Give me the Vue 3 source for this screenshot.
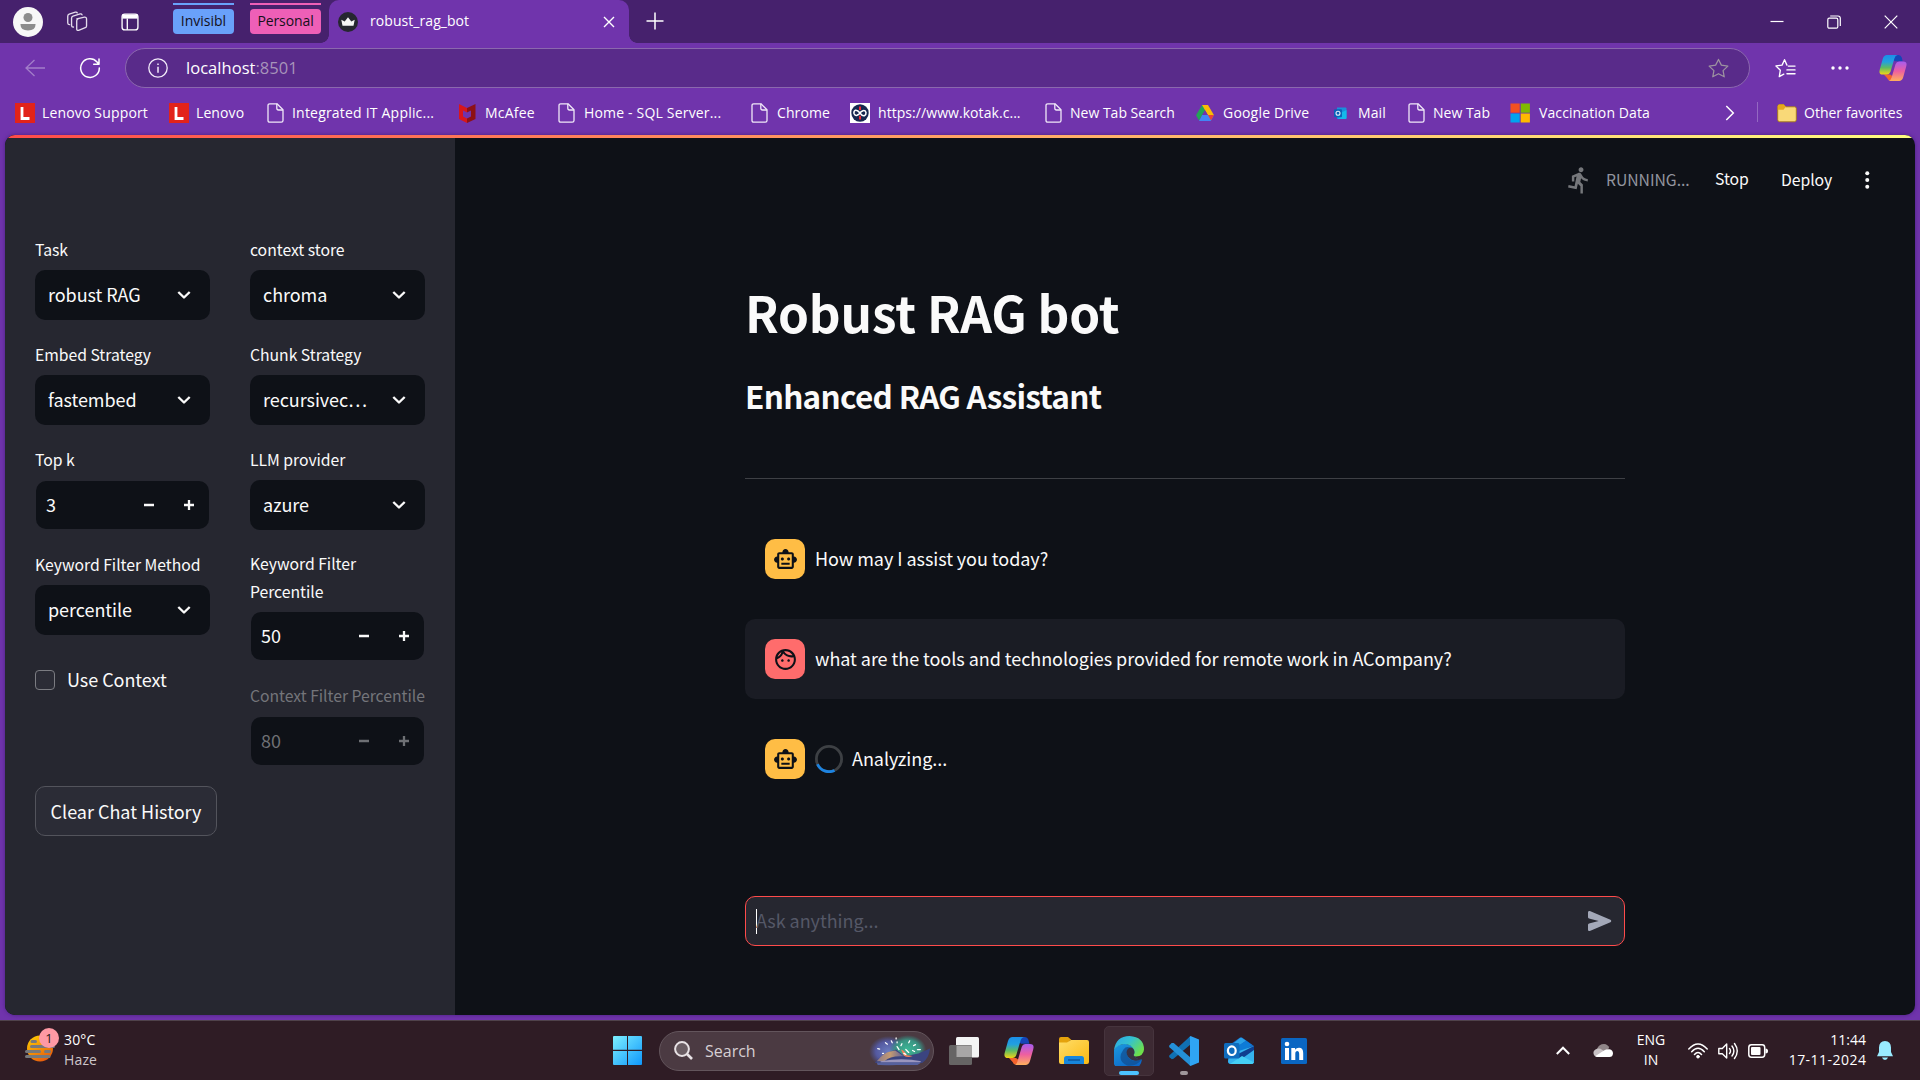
<script setup>
const bookmarks = [
  { label: 'Lenovo Support', icon: 'lenovo', w: 154, ls: 0.16 },
  { label: 'Lenovo', icon: 'lenovo', w: 96, ls: 0.1 },
  { label: 'Integrated IT Applic...', icon: 'page', w: 192, ls: 0.2 },
  { label: 'McAfee', icon: 'mcafee', w: 99, ls: 0.2, pad: 1 },
  { label: 'Home - SQL Server...', icon: 'page', w: 193, ls: 0.18, pad: 1 },
  { label: 'Chrome', icon: 'page', w: 101, ls: 0.1, pad: 1 },
  { label: 'https://www.kotak.c...', icon: 'kotak', w: 193, ls: 0.06, pad: 1 },
  { label: 'New Tab Search', icon: 'page', w: 152, ls: 0 },
  { label: 'Google Drive', icon: 'drive', w: 136, ls: 0.2, pad: 1 },
  { label: 'Mail', icon: 'mail', w: 75, ls: 0.1 },
  { label: 'New Tab', icon: 'page', w: 104, ls: 0 },
  { label: 'Vaccination Data', icon: 'ms', w: 150, ls: 0.1, pad: 2 },
]
const left = [
  { label: 'Task', value: 'robust RAG', type: 'select' },
  { label: 'Embed Strategy', value: 'fastembed', type: 'select' },
  { label: 'Top k', value: '3', type: 'number' },
  { label: 'Keyword Filter Method', value: 'percentile', type: 'select' },
]
const right = [
  { label: 'context store', value: 'chroma', type: 'select' },
  { label: 'Chunk Strategy', value: 'recursivec…', type: 'select' },
  { label: 'LLM provider', value: 'azure', type: 'select' },
  { label: 'Keyword Filter Percentile', value: '50', type: 'number', tall: true },
  { label: 'Context Filter Percentile', value: '80', type: 'number', disabled: true },
]
const messages = [
  { role: 'bot', text: 'How may I assist you today?' },
  { role: 'user', text: 'what are the tools and technologies provided for remote work in ACompany?' },
  { role: 'bot', text: 'Analyzing...', busy: true },
]
</script>

<template>
  <div class="screen">
    <svg class="defs" width="0" height="0">
      <defs>
        <linearGradient id="cpA" x1="0" y1="0" x2="0" y2="1">
          <stop offset="0" stop-color="#1b8fe8" /><stop offset=".35" stop-color="#22a0e0" />
          <stop offset=".65" stop-color="#5dbb63" /><stop offset="1" stop-color="#f2d416" />
        </linearGradient>
        <linearGradient id="cpB" x1="0" y1="0" x2="0" y2="1">
          <stop offset="0" stop-color="#a65cf0" /><stop offset=".5" stop-color="#ee5fa0" />
          <stop offset="1" stop-color="#ffb05c" />
        </linearGradient>
        <linearGradient id="winG" gradientUnits="userSpaceOnUse" x1="0" y1="0" x2="29" y2="29">
          <stop offset="0" stop-color="#7df0ff" /><stop offset="1" stop-color="#0f97fb" />
        </linearGradient>
        <linearGradient id="sunG" x1="0" y1="0" x2=".6" y2="1">
          <stop offset="0" stop-color="#ffd400" /><stop offset="1" stop-color="#e85d0c" />
        </linearGradient>
        <linearGradient id="edgeG" x1="0" y1="0" x2="1" y2=".6">
          <stop offset="0" stop-color="#2aa6e8" /><stop offset=".5" stop-color="#34c1d0" /><stop offset="1" stop-color="#6ee04a" />
        </linearGradient>
        <linearGradient id="edgeB" x1="0" y1="0" x2=".6" y2="1">
          <stop offset="0" stop-color="#1c9be0" /><stop offset="1" stop-color="#0b62c4" />
        </linearGradient>
        <linearGradient id="fold" x1="0" y1="0" x2="1" y2="1">
          <stop offset="0" stop-color="#ffdd68" /><stop offset="1" stop-color="#fbb912" />
        </linearGradient>
        <linearGradient id="hill" x1="0" y1="0" x2="1" y2="0">
          <stop offset="0" stop-color="#8d7a8c" /><stop offset=".5" stop-color="#c39a72" /><stop offset="1" stop-color="#5a5f9a" />
        </linearGradient>
        <radialGradient id="auG"><stop offset="0" stop-color="#3cb796" /><stop offset=".65" stop-color="#3a9382" /><stop offset="1" stop-color="#35877f" stop-opacity="0" /></radialGradient>
        <radialGradient id="auB"><stop offset="0" stop-color="#6b7cc0" /><stop offset=".65" stop-color="#5459a0" /><stop offset="1" stop-color="#4c5498" stop-opacity="0" /></radialGradient>
        <symbol id="copilot" viewBox="0 0 30 28">
          <path d="M18 0h3q2.500 0 3.400 2.700l1 4H17L14 4z" fill="#1545b8" />
          <path d="M5 21h7l4 3-1 3.500H12q-2.600 0-3.400-2.600z" fill="#f4632c" />
          <path d="M8.500 0H20q-2.600.4-3.500 3.800L12.300 18q-1 3-4 3H4Q-.8 21 .8 15.500L4 4Q5.300 0 8.500 0z" fill="url(#cpA)" />
          <path d="M21.500 28H10q2.600-.4 3.500-3.800L17.700 10q1-3 4-3H26q4.800 0 3.200 5.500L26 24q-1.300 4-4.500 4z" fill="url(#cpB)" />
        </symbol>
      </defs>
    </svg>

    <header class="tabs">
      <svg class="avatar" viewBox="0 0 30 30"><circle cx="15" cy="15" r="15" fill="#f7f7f7" /><circle cx="15" cy="10.500" r="4.500" fill="#8c8c8c" /><path d="M7.500 17h15v.8q0 5.700-7.500 5.700t-7.500-5.700z" fill="#8c8c8c" /></svg>
      <svg class="workspaces" viewBox="0 0 22 22" fill="none" stroke="#e4dcec" stroke-width="1.400" stroke-linejoin="round" stroke-linecap="round"><path d="M10.500 7.800l8-1.700q2-.3 2.200 1.600v7.500q0 1.400-1.300 1.900l-7 2.800q-2 .4-2-1.500V9.800q0-1.600 1.500-2z" transform="translate(.3 .4)" /><path d="M7.300 16.800q-1.800.2-2-1.500V7.500q0-1.600 1.500-2.200l7.500-2.200q1.600-.3 2 1" /><path d="M3.300 14.300Q1.400 14.300 1.300 12.600V5.400q0-1.600 1.500-2.200L9.300 1.200q1.600-.3 2 .8" /></svg>
      <svg class="vtabs" viewBox="0 0 20 20" fill="none" stroke="#fff" stroke-width="1.500"><rect x="1.200" y="1.200" width="17.600" height="17.600" rx="3" /><path d="M1.500 4h17" stroke-width="4.500" /><path d="M7 6v12.500" /></svg>
      <div class="group blue"><span>Invisibl</span></div>
      <div class="group pink"><span>Personal</span></div>
      <div class="tab">
        <svg class="fav" viewBox="0 0 20 20"><circle cx="10" cy="10" r="10" fill="#262730" /><path d="M4.500 13.800L3.300 7.800 6.700 9.400 10 5.300l3.300 4.100 3.400-1.600-1.200 6z" fill="#f6f6f6" /></svg>
        <span>robust_rag_bot</span>
        <svg class="x" viewBox="0 0 12 12" stroke="#fff" stroke-width="1.400"><path d="M1 1l10 10M11 1L1 11" /></svg>
      </div>
      <svg class="plus" viewBox="0 0 18 18" stroke="#fff" stroke-width="1.500"><path d="M9 0.500v17M.5 9h17" /></svg>
      <div class="winctl">
        <svg viewBox="0 0 14 14" stroke="#fff" stroke-width="1.200" fill="none"><path d="M.5 6.500h13" /></svg>
        <svg viewBox="0 0 14 14" stroke="#fff" stroke-width="1.200" fill="none"><rect x=".8" y="3.200" width="10" height="10" rx="1.500" /><path d="M3.200 1h7.800q2.300 0 2.300 2.300V11" /></svg>
        <svg viewBox="0 0 14 14" stroke="#fff" stroke-width="1.200" fill="none"><path d="M.7.7l12.600 12.600M13.300.7L.7 13.300" /></svg>
      </div>
    </header>

    <div class="toolbar">
      <svg class="back" viewBox="0 0 20 18" fill="none" stroke="#a27dc9" stroke-width="1.300"><path d="M9.500 1L1 9l8.500 8M1 9h19" /></svg>
      <svg class="reload" viewBox="0 0 22 22" fill="none" stroke="#fff" stroke-width="1.500" stroke-linecap="round" stroke-linejoin="round"><path d="M20.300 11A9.300 9.300 0 1 1 18 5l1.800 2M20 2v5.300h-5.300" /></svg>
      <div class="address">
        <svg class="info" viewBox="0 0 20 20" fill="none" stroke="#f3ecfa" stroke-width="1.300"><circle cx="10" cy="10" r="9.200" /><path d="M10 8.700v6M10 5.500v1.500" stroke-width="1.500" /></svg>
        <span class="url">localhost<i>:8501</i></span>
        <svg class="star" viewBox="0 0 22 20" fill="none" stroke="#9d93a0" stroke-width="1.300" stroke-linejoin="round"><path d="M11 1l3 6 6.800 1-5 4.700L17 19.200l-6-3.200-6 3.200 1.200-6.500-5-4.700L8 7z" /></svg>
      </div>
      <svg class="favs" viewBox="0 0 22 20" fill="none" stroke="#fff" stroke-width="1.400" stroke-linejoin="round" stroke-linecap="round"><path d="M12.500 7L10 1.300 7.400 7 1 7.800l4.600 4.500L4.500 19l4.700-2.600M14 8h7M12.500 12H21M12.500 16H21" /></svg>
      <svg class="more" viewBox="0 0 18 4" fill="#fff"><circle cx="2" cy="2" r="1.700" /><circle cx="9" cy="2" r="1.700" /><circle cx="16" cy="2" r="1.700" /></svg>
      <svg class="cop"><use href="#copilot" /></svg>
    </div>

    <nav class="bookmarks">
      <div v-for="b in bookmarks" :key="b.label" class="bm" :style="{ width: b.w + 'px' }">
        <svg v-if="b.icon === 'lenovo'" viewBox="0 0 20 20"><rect width="20" height="20" fill="#e2231a" /><path d="M7 4v11.500h7.500" fill="none" stroke="#fff" stroke-width="2.800" /></svg>
        <svg v-else-if="b.icon === 'page'" viewBox="0 0 20 20" fill="none" stroke="#f0e8f8" stroke-width="1.300" stroke-linejoin="round"><path d="M4.700.8H12l6 6v10.700q0 1.700-1.700 1.700H4.700Q3 19.200 3 17.500v-15Q3 .8 4.700.8z" /><path d="M11.800.8v4.500q0 1.700 1.700 1.700H18" /></svg>
        <svg v-else-if="b.icon === 'mcafee'" viewBox="0 0 20 20"><path d="M2 1l8 4v4.500L6 7.500v6l4 2V20l-8-4z" fill="#d8161c" /><path d="M18.500 1L10 5v4.500l4-2v6l-4 2V20l8.500-4z" fill="#8d1116" /></svg>
        <svg v-else-if="b.icon === 'kotak'" viewBox="0 0 20 20"><rect width="20" height="20" fill="#fff" /><circle cx="10" cy="10" r="8.700" fill="#16284f" /><path d="M10 10Q7.500 6.700 5.500 7.200 3.500 8.300 4 10.500q.8 2.500 3 1.800Q9 11.500 10 10t3-2.300q2.300-.5 3 1.800.3 2.300-1.700 3.300Q12.300 13.300 10 10z" fill="none" stroke="#fff" stroke-width="1.500" /><path d="M10 3.500v3.600M10 12.800v3.700" stroke="#ee2832" stroke-width="2" /></svg>
        <svg v-else-if="b.icon === 'drive'" viewBox="0 0 20 20"><path d="M7 2h6L7.300 12 4 17.500 1 12.300z" fill="#23a455" /><path d="M7 2h6l6 10.300h-6z" fill="#fbbc05" /><path d="M7.200 12H19l-3.200 6H4z" fill="#4285f4" /><path d="M13 12h6l-3 5.500z" fill="#ea4335" /><path d="M10 7.200L12.800 12H7.200z" fill="#7034ac" /></svg>
        <svg v-else-if="b.icon === 'mail'" viewBox="0 0 20 20"><path d="M6 4.500h8.500q1 0 1 1V15q0 1-1 1H6z" fill="#1890dc" /><path d="M9.500 10l6-3v8q0 1-1 1H7z" fill="#14b9ea" /><rect x="3" y="6.200" width="8" height="8" rx="1" fill="#0a62b8" /><circle cx="7" cy="10.200" r="2" fill="none" stroke="#e4eefa" stroke-width="1.100" /></svg>
        <svg v-else viewBox="0 0 20 20"><path d="M.5.500h9.200v9.200H.5z" fill="#f25022" /><path d="M10.700.500h9.200v9.200h-9.200z" fill="#7fba00" /><path d="M.5 10.500h9.200v9H.5z" fill="#00a4ef" /><path d="M10.700 10.500h9.200v9h-9.200z" fill="#ffb900" /></svg>
        <span :style="{ letterSpacing: b.ls + 'px', paddingLeft: (b.pad || 0) + 'px' }">{{ b.label }}</span>
      </div>
      <svg class="chev" viewBox="0 0 10 16" fill="none" stroke="#fff" stroke-width="1.500"><path d="M1.300 1l7 7-7 7" /></svg>
      <i class="divider"></i>
      <svg class="folder" viewBox="0 0 20 20"><path d="M.7 3.500q0-2 2-2h4l2 2.300h9q1.600 0 1.600 1.700v11.300q0 2-2 2H2.700q-2 0-2-2z" fill="#f9d978" stroke="#a87a15" stroke-width=".9" /><path d="M.8 6.800V3.500q0-2 2-2h4l2 2.300-2.300 3z" fill="#e6a91c" /></svg>
      <span>Other favorites</span>
    </nav>

    <div class="viewport">
      <div class="page">
        <aside>
          <div class="cols">
            <div v-for="(col, ci) in [left, right]" :key="ci" class="col">
              <div v-for="f in col" :key="f.label" class="field" :class="[f.type, { tall: f.tall, disabled: f.disabled }]">
                <label>{{ f.label }}</label>
                <div class="box">
                  <span>{{ f.value }}</span>
                  <svg v-if="f.type === 'select'" class="down" viewBox="0 0 14 10" fill="none" stroke="#fafafa" stroke-width="2.400" stroke-linejoin="round"><path d="M1.300 2L7 7.500 12.700 2" /></svg>
                  <template v-else>
                    <svg class="step" viewBox="0 0 10 10" stroke="currentColor" stroke-width="2.500"><path d="M0 5h10" /></svg>
                    <svg class="step" viewBox="0 0 10 10" stroke="currentColor" stroke-width="2.300"><path d="M0 5h10M5 0v10" /></svg>
                  </template>
                </div>
              </div>
              <div v-if="ci === 0" class="check"><i></i><span>Use Context</span></div>
            </div>
          </div>
          <button class="clear">Clear Chat History</button>
        </aside>

        <main>
          <div class="status">
            <svg class="runner" viewBox="2 1 18 22.500" fill="#75777b"><path d="M13.490 5.480c1.100 0 2-.9 2-2s-.9-2-2-2-2 .9-2 2 .9 2 2 2zm-3.600 13.900l1-4.400 2.100 2v6h2v-7.500l-2.100-2 .6-3c1.300 1.500 3.300 2.500 5.500 2.500v-2c-1.900 0-3.500-1-4.300-2.400l-1-1.600c-.4-.6-1-1-1.700-1-.3 0-.5.1-.8.1l-5.200 2.200v4.700h2v-3.400l1.800-.7-1.600 8.100-4.900-1-.4 2 7 1.400z" /></svg>
            <span class="running">RUNNING...</span>
            <span class="stop">Stop</span>
            <span class="deploy">Deploy</span>
            <svg class="kebab" viewBox="0 0 4 18" fill="#fafafa"><circle cx="2" cy="2.200" r="2" /><circle cx="2" cy="9" r="2" /><circle cx="2" cy="15.800" r="2" /></svg>
          </div>
          <div class="content">
            <h1>Robust RAG bot</h1>
            <h2>Enhanced RAG Assistant</h2>
            <hr />
            <div v-for="m in messages" :key="m.text" class="msg" :class="m.role">
              <div class="who">
                <svg v-if="m.role === 'bot'" viewBox="0 0 24 24" fill="#0e1117"><path d="M20 9V7c0-1.100-.9-2-2-2h-3c0-1.660-1.340-3-3-3S9 3.340 9 5H6c-1.100 0-2 .9-2 2v2c-1.660 0-3 1.340-3 3s1.340 3 3 3v4c0 1.100.9 2 2 2h12c1.100 0 2-.9 2-2v-4c1.660 0 3-1.340 3-3s-1.340-3-3-3zm-2 10H6V7h12v12zM9 13c-.83 0-1.500-.67-1.500-1.500S8.170 10 9 10s1.500.67 1.500 1.500S9.830 13 9 13zm7.500-1.500c0 .83-.67 1.500-1.500 1.500s-1.500-.67-1.500-1.500.67-1.500 1.500-1.500 1.500.67 1.500 1.500zM8 15h8v2H8v-2z" /></svg>
                <svg v-else viewBox="0 0 24 24" fill="#0e1117"><path d="M10.250 13c0 .69-.56 1.250-1.250 1.250S7.750 13.690 7.750 13s.56-1.250 1.250-1.250 1.250.56 1.250 1.250zM15 11.750c-.69 0-1.250.56-1.250 1.250s.56 1.250 1.250 1.250 1.250-.56 1.250-1.250-.56-1.250-1.250-1.250zm7 .25c0 5.520-4.480 10-10 10S2 17.520 2 12 6.480 2 12 2s10 4.480 10 10zM10.660 4.120C12.060 6.440 14.600 8 17.500 8c.46 0 .91-.05 1.340-.12C17.440 5.560 14.900 4 12 4c-.46 0-.91.05-1.340.12zM4.420 9.470c1.710-.97 3.030-2.550 3.660-4.440C6.370 6 5.050 7.580 4.420 9.470zM20 12c0-.78-.12-1.530-.33-2.240-.7.150-1.420.24-2.170.24-3.130 0-5.920-1.440-7.760-3.690C8.690 8.870 6.600 10.880 4 11.860c.01.04 0 .09 0 .14 0 4.410 3.590 8 8 8s8-3.590 8-8z" /></svg>
              </div>
              <svg v-if="m.busy" class="spin" viewBox="0 0 28 28" fill="none" stroke-width="2.800"><circle cx="14" cy="14" r="12.600" stroke="#3d4044" /><path d="M2.500 19.200A12.600 12.600 0 0 0 19.500 25.400" stroke="#1c83e1" /></svg>
              <p>{{ m.text }}</p>
            </div>
          </div>
          <div class="chat">
            <i class="caret"></i>
            <span>Ask anything...</span>
            <svg viewBox="0 0 24 24" fill="#a3a8b8"><path d="M3 5.510v3.710c0 .46.310.86.760.97L11 12l-7.240 1.810c-.45.110-.76.510-.76.970v3.710c0 .72.730 1.200 1.390.92l15.420-6.490c.82-.34.82-1.500 0-1.840L4.390 4.590C3.730 4.310 3 4.790 3 5.510z" /></svg>
          </div>
        </main>
      </div>
    </div>

    <footer class="taskbar">
      <div class="weather">
        <svg viewBox="0 0 36 36"><circle cx="15" cy="21.500" r="13" fill="url(#sunG)" /><g stroke="#77797c" stroke-width="3" stroke-linecap="round"><path d="M7 14.500h3.500M6.500 19.500h22M1.500 24.500h13M20.500 24.500h4M1.500 29.500h22.500" /></g><circle cx="24" cy="11" r="10" fill="#ff99a4" /></svg>
        <b>1</b>
        <div><span>30°C</span><span class="dim">Haze</span></div>
      </div>
      <div class="apps">
        <svg class="win" viewBox="0 0 29 29" fill="url(#winG)"><path d="M1 0h13v13.800H0V1q0-1 1-1zM15 0h13q1 0 1 1v12.800H15zM0 15h14v14H1q-1 0-1-1zM15 15h14v13q0 1-1 1H15z" /></svg>
        <div class="search">
          <svg class="glass" viewBox="0 0 19 19" fill="none" stroke="#e8e2e5"><circle cx="8" cy="8" r="6.900" stroke-width="2" fill="#6a5d63" /><path d="M13 13l5 5" stroke-width="2.600" /></svg>
          <span>Search</span>
          <svg class="art" viewBox="0 0 64 32">
            <ellipse cx="20" cy="17" rx="20" ry="16" fill="url(#auB)" /><ellipse cx="40" cy="15" rx="19" ry="15" fill="url(#auG)" />
            <path d="M6 29Q12 21 20 18l8-3 9 7 14-3 12-5q-1 10-8 15z" fill="#3b4480" />
            <path d="M8 27q7-9 14-10l5-1 9 6q-14-1-20 5z" fill="url(#hill)" />
            <path d="M33 15q4 1 6 6l6 .8q-5 2-9-.5z" fill="#f0805a" />
            <path d="M12 27q22-4 42 0l-2 1.500H12z" fill="#9a95bd" /><path d="M8 28.500h46l-4 2.500H9z" fill="#56619e" />
            <g stroke="#fff" stroke-width="1.300" stroke-linecap="round"><path d="M17 8l2 1.500M23 6l1 2M29 7v1M9 14l2 .5M42 6l-1 2M48 10l-2 1M53 15h-3M29 12l2 3M34 9l-1 2M38 15l3 3M45 16l2 1M28 3v1M36 19l2 1M14 19h1" /></g>
          </svg>
        </div>
        <svg class="tv" viewBox="0 0 30 28"><rect x="7" y="0" width="23" height="20.500" rx="1.500" fill="#f4f4f4" /><rect x="0" y="8" width="23" height="20" rx="1.500" fill="#666464" /><path d="M7.500 8.500h15.500v11.500H7.500z" fill="#a8a6a6" /></svg>
        <svg class="cp"><use href="#copilot" /></svg>
        <svg class="ex" viewBox="0 0 30 27"><path d="M0 2q0-2 2-2h7l4 3.500h-2L8 7H0z" fill="#e5a20c" /><path d="M0 5.500h8L12 3h16q2 0 2 2v20q0 2-2 2H2q-2 0-2-2z" fill="url(#fold)" /><path d="M5 27v-5.500Q5 19 7.500 19h15q2.500 0 2.500 2.500V27z" fill="#1786dc" /><path d="M9 23h12" stroke="#0b4f93" stroke-width="1.300" /></svg>
        <div class="cell active">
          <svg viewBox="0 0 30 30"><path d="M28 23.500A15 15 0 1 1 0 14Q3 7 12 8q9 1 9 8 0 2-1.500 3.500 2.500 4 8.500 4z" fill="url(#edgeB)" /><path d="M13 29.500Q2 24 9.500 13.500 12 10 16 11.500q-5 4-2 9.500 4.500 6 13.500 2.800Q22 31 13 29.500z" fill="#124f91" opacity=".75" /><path d="M0 14Q2 0 15.500 0 30 1 30 13.500 29.500 20 22 20.500q-3.500-.3-2.300-1.500Q21 17 20 14 17.500 8 10.500 8 3.500 8.500 0 14z" fill="url(#edgeG)" /><path d="M19.600 19.100Q21.500 16 19.500 13q-1.800-2-4-1.300-4 2.300-2.500 7 1.500 4.300 7 5.800 4.500.8 8-1.500-6.500 1-8.400-3.900z" fill="#3d2a33" opacity=".9" /></svg>
          <i></i>
        </div>
        <div class="cell vs">
          <svg viewBox="0 0 30 30"><path d="M21.500 0v8.500L4.500 22.800 2.800 23.200.5 21.200q-.8-1 0-2z" fill="#1070b3" /><path d="M.5 9.200l2.200-2.300 2 .2L21.500 21.500V30L.5 11.200q-.8-1 0-2z" fill="#2490d8" /><path d="M21.500 0L30 3.500v23L21.500 30q-1.500-.5-.5-3V3q-1-2.500.5-3z" fill="#2fa4f3" /></svg>
          <i></i>
        </div>
        <svg class="ol" viewBox="0 0 30 27"><path d="M4 9L16 .5q1-.7 2 0L30 9v15q0 3-3 3H7q-3 0-3-3z" fill="#1565c0" /><path d="M8 7.500L16 1q1-.7 2 0l4 2.800-12 8z" fill="#2aa0e8" /><path d="M22 3.800L28 8 15 17l-5-5z" fill="#0d7bd8" /><path d="M6 17l9-3 15-5v15q0 3-3 3H7q-3 0-3-3z" fill="#35b4ee" /><path d="M12 18L30 9v4L16 23z" fill="#0f3f8f" /><path d="M6 27l12-8 12 6.500Q29 27 27 27z" fill="#45cff5" /><rect y="6" width="15.500" height="15.500" rx="1.500" fill="#0f6cbd" /><ellipse cx="7.800" cy="13.700" rx="3.900" ry="4.300" fill="none" stroke="#fff" stroke-width="2.200" /></svg>
        <svg class="li" viewBox="0 0 26 26"><rect width="26" height="26" rx="1.500" fill="#0a66c2" /><circle cx="6" cy="6" r="2.300" fill="#fff" /><path d="M4 10h4v12H4zM10.300 10h3.800v1.700q1.200-2 3.900-2 4.200 0 4.200 5.200V22h-4v-6.300q0-2.600-1.800-2.600-2.100 0-2.100 2.700V22h-4z" fill="#fff" /></svg>
      </div>
      <div class="tray">
        <svg class="up" viewBox="0 0 14 9" fill="none" stroke="#fff" stroke-width="2"><path d="M.8 8L7 1.700 13.200 8" /></svg>
        <svg class="cloud" viewBox="0 0 20 13"><path d="M4 5Q6 0 11 0q4 .3 5.200 4L12 8z" fill="#908689" /><path d="M1 11Q-1 6.500 4 4.700q3-.8 5 1L14 9 4 13Q2 13 1 11z" fill="#c8c1c4" /><path d="M2.500 12L11 6.500q2-1.500 5.500-1.300Q20 6 20 9.500 19.700 13 16.500 13H4.500q-1.500 0-2-1z" fill="#fff" /></svg>
        <div class="lang"><span>ENG</span><span>IN</span></div>
        <svg class="wifi" viewBox="0 0 20 16" fill="none" stroke="#fff" stroke-width="1.500" stroke-linecap="round"><path d="M.8 6Q10-4 19.200 6M3.700 8.700Q10 1.700 16.300 8.700M6.500 11.500q3.500-4 7 0" /><circle cx="10" cy="13.700" r="1.400" fill="#fff" stroke-width=".8" /></svg>
        <svg class="vol" viewBox="0 0 20 18" fill="none" stroke="#fff" stroke-width="1.400" stroke-linecap="round" stroke-linejoin="round"><path d="M.8 6.500h3.500L8.700 2v14L4.300 11.700H.8zM11.500 6.500q2 2.500 0 5M14 4q3.800 5 0 10M16.500 1.500q5.500 7.500 0 15" /></svg>
        <svg class="bat" viewBox="0 0 20 14"><rect x=".8" y=".8" width="15.900" height="12.400" rx="2.600" fill="none" stroke="#fff" stroke-width="1.500" /><rect x="3" y="3" width="9.500" height="8" rx="1" fill="#fff" /><path d="M17.500 4.500q2.500 0 2.500 2.500t-2.500 2.500z" fill="#fff" /></svg>
        <div class="clock"><span>11:44</span><span class="date">17-11-2024</span></div>
        <svg class="bell" viewBox="0 0 16 19" fill="#99ebff"><path d="M8 0q5.800.4 6 6.500V11l2 4.200H0L2 11V6.500Q2.200.4 8 0zM5 16.500h6q-.8 2.400-3 2.400T5 16.500z" /></svg>
      </div>
    </footer>
  </div>
</template>

<style>
body { background: #0e1117; }
</style>

<style scoped>
* { box-sizing: border-box; }
.screen { width: 1920px; height: 1080px; overflow: hidden; display: flex; flex-direction: column; background: #7034ac; color: #fff; font: 14px/20px "Open Sans", "Noto Sans", sans-serif; }
.defs { position: absolute; }
svg { display: block; flex: none; }
span { white-space: nowrap; }

.tabs { height: 43px; flex: none; background: #46216d; display: flex; align-items: center; }
.avatar { width: 30px; height: 30px; margin-left: 13px; }
.workspaces { width: 22px; height: 21px; margin-left: 23px; }
.vtabs { width: 18px; height: 18px; margin-left: 33px; }
.group { height: 31px; margin-top: -6px; border-top: 2px solid; display: flex; align-items: flex-end; }
.group span { height: 25px; width: 100%; border-radius: 4px; line-height: 24px; text-align: center; color: #14101a; font-size: 14px; }
.group.blue { width: 61px; margin-left: 34px; border-color: #69a1fa; }
.group.blue span { background: #69a1fa; }
.group.pink { width: 71px; margin-left: 16px; border-color: #ee5fb7; }
.group.pink span { background: #ee5fb7; letter-spacing: -.1px; }
.tab { width: 300px; height: 43px; margin-left: 8px; background: #7034ac; border-radius: 10px 10px 0 0; display: flex; align-items: center; position: relative; }
.tab::before, .tab::after { content: ""; position: absolute; bottom: 0; width: 8px; height: 8px; }
.tab::before { left: -8px; background: radial-gradient(circle at 0 0, #46216d 7.500px, #7034ac 8px); }
.tab::after { right: -8px; background: radial-gradient(circle at 100% 0, #46216d 7.500px, #7034ac 8px); }
.fav { width: 20px; height: 20px; margin-left: 9px; }
.tab span { margin: -1px 0 0 12px; flex: 1; letter-spacing: .06px; }
.x { width: 12px; height: 12px; margin-right: 14px; }
.plus { width: 18px; height: 18px; margin: -1px 0 0 17px; }
.winctl { margin-left: auto; display: flex; gap: 43px; margin-right: 22px; }
.winctl svg { width: 14px; height: 14px; }

.toolbar { height: 46px; flex: none; display: flex; align-items: center; padding-top: 3px; }
.back { width: 20px; height: 18px; margin-left: 25px; }
.reload { width: 22px; height: 22px; margin-left: 34px; }
.address { width: 1625px; height: 40px; margin-left: 24px; border: 1px solid #8b68ae; border-radius: 20px; background: #592b8a; display: flex; align-items: center; margin-top: 1px; }
.info { width: 20px; height: 20px; margin-left: 22px; }
.url { font-size: 16.500px; margin: -1px 0 0 18px; flex: 1; letter-spacing: .04px; }
.url i { font-style: normal; color: #a794ba; }
.star { width: 21px; height: 20px; margin-right: 20px; }
.favs { width: 21px; height: 20px; margin-left: 25px; }
.more { width: 18px; height: 4px; margin-left: 35px; }
.cop { width: 28px; height: 26px; margin-left: 30px; }

.bookmarks { height: 46px; flex: none; display: flex; align-items: center; padding-left: 15px; }
.bookmarks .bm { flex: none; display: flex; align-items: center; gap: 7px; }
.bm svg, .folder { width: 20px; height: 20px; }
.bm svg, .chev, .folder { position: relative; top: 1px; }
.bookmarks span { margin-top: 1px; }
.chev { width: 10px; height: 16px; margin-left: 65px; }
.divider { width: 1px; height: 20px; margin-left: 22px; background: #9468c2; }
.folder { margin: 0 7px 0 19px; }

.viewport { height: 885px; flex: none; padding: 0 5px 5px; }
.page { width: 1910px; height: 880px; border-radius: 10px; overflow: hidden; display: flex; position: relative; background: #0e1117; color: #fafafa; font-family: "Noto Sans CJK JP", "Noto Sans CJK SC", sans-serif; font-size: 18px; letter-spacing: -.05px; box-shadow: 0 0 4px #4a2080; }
.page::before { content: ""; position: absolute; inset: 0 0 auto; height: 3px; background: linear-gradient(90deg, #ff4b4b, #fffd80); }
aside { width: 450px; background: #262730; padding: 100px 30px 0; }
.cols { display: flex; gap: 40px; height: 525px; }
.col { width: 175px; }
.field { height: 105px; }
label { display: block; height: 35px; padding-top: 3px; line-height: 24px; font-size: 15.750px; white-space: nowrap; letter-spacing: -.03px; }
.tall { height: 131px; }
.tall label { height: 62px; padding-top: 0; line-height: 28px; white-space: normal; width: 140px; }
.box { height: 50px; border-radius: 10px; background: #0e1117; display: flex; align-items: center; padding: 0 19px 0 13px; }
.box span { flex: 1; line-height: 28px; margin-top: -3px; }
.down { width: 14px; height: 10px; }
.number .box { height: 48px; margin: 1px 1px 0; padding: 0 15px 0 10px; }
.tall .box { margin-top: 0; }
.step { width: 10px; height: 10px; }
.step + .step { margin-left: 30px; }
.disabled label { color: #74757a; }
.disabled .box { color: #6e7074; }
.check { display: flex; align-items: center; height: 30px; margin-top: 10px; gap: 12px; }
.check i { width: 20px; height: 20px; border: 1px solid #7b7c82; border-radius: 4px; background: #2b2c36; }
.check span { margin-top: -3px; }
.clear { display: block; width: 182px; height: 50px; margin-top: 26px; padding: 0 0 1px; border: 1px solid #53545c; border-radius: 10px; background: #2b2c36; color: #fafafa; font: inherit; font-size: 18px; white-space: nowrap; }

main { flex: 1; display: flex; flex-direction: column; }
.status { height: 90px; display: flex; align-items: center; font-size: 15.750px; }
.runner { width: 22px; height: 29px; margin-left: 1112px; }
.running { width: 109px; margin-left: 17px; color: #92959f; }
.stop { width: 66px; margin-top: -2px; }
.deploy { width: 84px; }
.kebab { width: 4.500px; height: 18px; }
.content { width: 880px; margin-left: 290px; height: 671px; }
h1 { margin: 57px 0 0; height: 64px; font-size: 49.500px; line-height: 60px; font-weight: 700; letter-spacing: -.15px; }
h2 { margin: 29px 0 0; font-size: 31.500px; line-height: 40px; font-weight: 600; letter-spacing: -.7px; }
hr { height: 1px; border: 0; background: #3e4045; margin: 63px 0 40px; }
.msg { height: 80px; margin-bottom: 20px; padding: 0 20px; display: flex; align-items: center; border-radius: 10px; }
.msg.user { background: #1a1c24; }
.who { width: 40px; height: 40px; border-radius: 10px; background: #ffbd45; display: flex; align-items: center; justify-content: center; margin-right: 10px; }
.user .who { background: #ff6c6c; }
.who svg { width: 25px; height: 25px; }
.spin { width: 28px; height: 28px; margin-right: 9px; }
.msg p { margin: -2px 0 0; line-height: 30px; white-space: nowrap; }
.chat { width: 880px; height: 50px; margin-left: 290px; border: 1px solid #ff4b4b; border-radius: 10px; background: #262730; display: flex; align-items: center; padding-left: 10px; color: #555867; }
.caret { width: 1px; height: 25px; background: #fff; margin-right: -1px; }
.chat span { flex: 1; margin-top: -3px; }
.chat svg { width: 32px; height: 32px; margin-right: 8px; }

.taskbar { height: 60px; flex: none; background: #2f1c25; border-top: 1px solid #50424b; display: flex; align-items: center; position: relative; }
.weather { width: 613px; height: 60px; display: flex; padding-left: 25px; position: relative; }
.weather svg { width: 36px; height: 36px; margin-top: 6px; }
.weather b { position: absolute; left: 39px; top: 7px; width: 20px; text-align: center; color: #2b1a20; font-weight: 400; font-size: 13px; }
.weather div { display: flex; flex-direction: column; margin: 9px 0 0 3px; letter-spacing: .15px; }
.dim { color: #cdc6ca; }
.apps { display: flex; align-items: center; height: 59px; }
.win { width: 29px; height: 29px; }
.search { width: 275px; height: 40px; margin-left: 17px; border-radius: 20px; border: 1px solid #63555c; background: #4b3a42; display: flex; align-items: center; }
.glass { width: 19px; height: 19px; margin-left: 14px; }
.search span { font-size: 16px; margin: 1px 0 0 12px; color: #d6cfd3; flex: 1; }
.art { width: 62px; height: 31px; margin-right: 2px; }
.tv { width: 30px; height: 28px; margin-left: 15px; }
.cp { width: 30px; height: 28px; margin-left: 25px; }
.ex { width: 30px; height: 27px; margin-left: 25px; }
.cell { width: 50px; height: 50px; display: flex; flex-direction: column; align-items: center; padding-top: 9px; border-radius: 5px; border: 1px solid transparent; }
.cell svg { width: 30px; height: 30px; }
.cell i { width: 20px; height: 4px; border-radius: 2px; margin-top: 5px; background: #4cc2ff; flex: none; }
.cell.active { margin-left: 15px; background: #3d2a33; border-color: #46343d; }
.cell.vs { margin-left: 5px; }
.vs i { width: 8px; background: #a0969b; }
.ol { width: 30px; height: 27px; margin-left: 15px; }
.li { width: 26px; height: 26px; margin-left: 27px; }
.tray { margin-left: auto; display: flex; align-items: center; height: 59px; padding-right: 27px; }
.up { width: 14px; height: 9px; margin-right: 23px; }
.cloud { width: 20px; height: 13px; margin-right: 18px; }
.lang, .clock { display: flex; flex-direction: column; margin-top: -1px; }
.lang { width: 40px; align-items: center; margin-right: 17px; }
.wifi { width: 20px; height: 16px; margin-right: 10px; }
.vol { width: 20px; height: 18px; margin-right: 10px; }
.bat { width: 20px; height: 14px; }
.clock { width: 98px; align-items: flex-end; margin-right: 11px; }
.date { letter-spacing: .48px; margin-right: -.5px; }
.bell { width: 16px; height: 19px; }
</style>
